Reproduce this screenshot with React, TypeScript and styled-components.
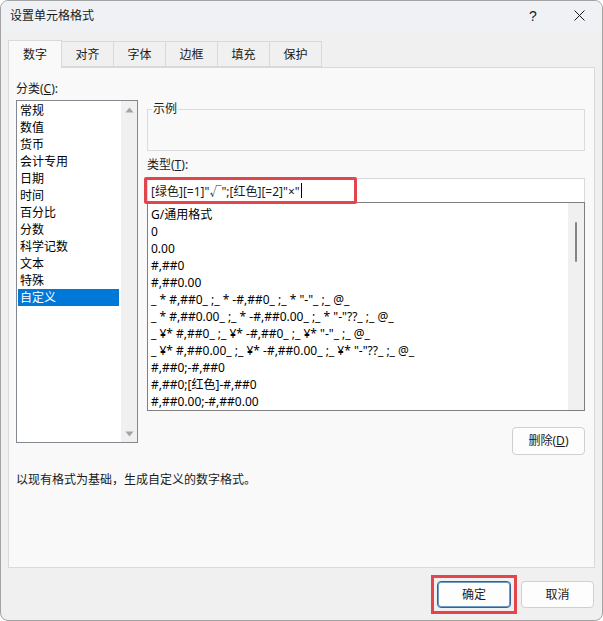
import React from 'react'
import styled, { createGlobalStyle } from 'styled-components'

const GlobalStyle = createGlobalStyle`
  html, body {
    margin: 0;
    padding: 0;
    background: #ffffff;
  }
  body {
    font-family: "Noto Sans", "Noto Sans CJK SC", sans-serif;
    font-size: 12px;
    color: #1a1a1a;
  }
  * {
    box-sizing: border-box;
  }
`

const Window = styled.div`
  width: 603px;
  height: 621px;
  display: flex;
  flex-direction: column;
  background: #f0f0f0;
  border: 1px solid #a3a3a3;
  border-radius: 8px;
  overflow: hidden;
`
const TitleBar = styled.div`
  flex: none;
  height: 31px;
  display: flex;
  align-items: center;
  background: #eff1f4;
`
const Title = styled.div`
  flex: 1;
  padding: 0 0 2px 9px;
  line-height: 16px;
`
const WinButton = styled.div`
  width: 46px;
  height: 31px;
  display: flex;
  align-items: center;
  justify-content: center;
  padding-bottom: 2px;
  font-family: "Liberation Sans", sans-serif;
  font-size: 14px;
`
const Body = styled.div`
  flex: 1;
  display: flex;
  flex-direction: column;
  padding: 8px 7px 0 7px;
`
const TabStrip = styled.div`
  flex: none;
  height: 27px;
  display: flex;
  align-items: flex-end;
`
const Tab = styled.div<{ $active?: boolean }>`
  position: relative;
  z-index: ${({ $active }) => ($active ? 2 : 1)};
  width: ${({ $active }) => ($active ? 54 : 53)}px;
  height: ${({ $active }) => ($active ? 28 : 26)}px;
  margin-bottom: ${({ $active }) => ($active ? -1 : 0)}px;
  margin-right: -1px;
  display: flex;
  align-items: center;
  justify-content: center;
  padding-top: ${({ $active }) => ($active ? 0 : 2)}px;
  line-height: 16px;
  background: ${({ $active }) => ($active ? '#f9f9f9' : '#f0f0f0')};
  border: 1px solid #d9d9d9;
  border-bottom: ${({ $active }) => ($active ? 'none' : '1px solid #d9d9d9')};
`
const Panel = styled.div`
  flex: 1;
  display: flex;
  flex-direction: column;
  background: #f9f9f9;
  border: 1px solid #d9d9d9;
  padding: 13px 9px 0 7px;
`
const ContentRow = styled.div`
  display: flex;
  gap: 9px;
`
const LeftCol = styled.div`
  width: 122px;
  display: flex;
  flex-direction: column;
`
const RightCol = styled.div`
  flex: 1;
  display: flex;
  flex-direction: column;
  padding-top: 20px;
`
const Label = styled.div<{ $gap?: number }>`
  line-height: 16px;
  margin-top: ${({ $gap }) => $gap ?? 0}px;
`
const U = styled.span`
  text-decoration: underline;
  text-underline-offset: 1px;
`
const CategoryList = styled.div`
  margin-top: 3px;
  height: 343px;
  display: flex;
  background: #ffffff;
  border: 1px solid #828790;
`
const CategoryItems = styled.div`
  flex: 1;
  padding: 1px 2px 0 1px;
`
const CategoryItem = styled.div<{ $selected?: boolean }>`
  height: 17px;
  line-height: 17px;
  padding-left: 2px;
  white-space: nowrap;
  background: ${({ $selected }) => ($selected ? '#0078d7' : 'transparent')};
  color: ${({ $selected }) => ($selected ? '#ffffff' : '#000000')};
`
const ScrollTrack = styled.div`
  width: 16px;
  flex: none;
  display: flex;
  flex-direction: column;
  align-items: center;
  background: #f0f0f0;
`
const ArrowBox = styled.div`
  height: 17px;
  width: 16px;
  display: flex;
  align-items: center;
  justify-content: center;
`
const Spacer = styled.div`
  flex: 1;
`
const Thumb = styled.div`
  margin-top: 19px;
  width: 2px;
  height: 40px;
  border-radius: 1px;
  background: #858585;
`
const SampleGroup = styled.fieldset`
  margin: 0;
  padding: 0 4px;
  height: 50px;
  min-inline-size: 0;
  border: 1px solid #dcdcdc;
`
const SampleLegend = styled.legend`
  padding: 0 1px;
  line-height: 16px;
  font-size: 12px;
`
const TypeBox = styled.div`
  position: relative;
  margin-top: 5px;
  height: 24px;
  display: flex;
  align-items: center;
  padding-left: 3px;
  background: #ffffff;
  border: 1px solid #d9d9d9;
  border-bottom: none;
  white-space: pre;
`
const Caret = styled.span`
  display: inline-block;
  width: 1px;
  height: 15px;
  margin-left: 1px;
  background: #000000;
`
const RedMark = styled.div`
  position: absolute;
  left: -4px;
  top: -2px;
  width: 213px;
  height: 27px;
  border: 3px solid #e2464c;
  border-radius: 2px;
  pointer-events: none;
`
const FormatList = styled.div`
  height: 209px;
  display: flex;
  background: #ffffff;
  border: 1px solid #7f7f7f;
`
const FormatItems = styled.div`
  flex: 1;
  padding: 3px 3px 0 3px;
  overflow: hidden;
`
const FormatItem = styled.div`
  height: 17px;
  line-height: 17px;
  white-space: pre;
  color: #000000;
`
const Button = styled.div<{ $primary?: boolean }>`
  width: ${({ $primary }) => ($primary ? 74 : 73)}px;
  height: ${({ $primary }) => ($primary ? 27 : 28)}px;
  display: flex;
  align-items: center;
  justify-content: center;
  line-height: 16px;
  background: #fdfdfd;
  border: 1px solid ${({ $primary }) => ($primary ? '#2f6596' : '#d0d0d0')};
  border-radius: 4px;
  box-shadow: ${({ $primary }) => ($primary ? 'inset 0 0 0 1px #6f9bc4' : 'none')};
`
const DeleteButton = styled(Button)`
  align-self: flex-end;
  margin-top: 16px;
`
const CancelButton = styled(Button)`
  margin-top: 6px;
  height: 27px;
`
const OkFrame = styled.div`
  display: flex;
  padding: 3px;
  border: 3px solid #e2464c;
`
const Description = styled.div`
  margin-top: 17px;
  line-height: 16px;
`
const Footer = styled.div`
  flex: none;
  height: 52px;
  display: flex;
  justify-content: flex-end;
  align-items: flex-start;
  gap: 4px;
  padding: 7px 8px 0 0;
`

const categories = ['常规', '数值', '货币', '会计专用', '日期', '时间', '百分比', '分数', '科学记数', '文本', '特殊', '自定义']

const formats = [
  'G/通用格式',
  '0',
  '0.00',
  '#,##0',
  '#,##0.00',
  '_ * #,##0_ ;_ * -#,##0_ ;_ * "-"_ ;_ @_',
  '_ * #,##0.00_ ;_ * -#,##0.00_ ;_ * "-"??_ ;_ @_',
  '_ ¥* #,##0_ ;_ ¥* -#,##0_ ;_ ¥* "-"_ ;_ @_',
  '_ ¥* #,##0.00_ ;_ ¥* -#,##0.00_ ;_ ¥* "-"??_ ;_ @_',
  '#,##0;-#,##0',
  '#,##0;[红色]-#,##0',
  '#,##0.00;-#,##0.00',
]

const tabs = ['数字', '对齐', '字体', '边框', '填充', '保护']

const Triangle = ({ up }: { up?: boolean }) => (
  <svg width="9" height="6" viewBox="0 0 9 6">
    <path d={up ? 'M0.5 5.5 L4.5 0.5 L8.5 5.5 Z' : 'M0.5 0.5 L4.5 5.5 L8.5 0.5 Z'} fill="#a3a3a3" />
  </svg>
)

const CloseIcon = () => (
  <svg width="11" height="11" viewBox="0 0 11 11">
    <path d="M0.5 0.5 L10.5 10.5 M10.5 0.5 L0.5 10.5" stroke="#1a1a1a" strokeWidth="1" fill="none" />
  </svg>
)

const App = () => {
  return (
    <>
      <GlobalStyle />
      <Window>
        <TitleBar>
          <Title>设置单元格格式</Title>
          <WinButton>?</WinButton>
          <WinButton>
            <CloseIcon />
          </WinButton>
        </TitleBar>
        <Body>
          <TabStrip>
            {tabs.map((t, i) => (
              <Tab key={t} $active={i === 0}>{t}</Tab>
            ))}
          </TabStrip>
          <Panel>
            <ContentRow>
              <LeftCol>
                <Label>分类(<U>C</U>):</Label>
                <CategoryList>
                  <CategoryItems>
                    {categories.map((c) => (
                      <CategoryItem key={c} $selected={c === '自定义'}>{c}</CategoryItem>
                    ))}
                  </CategoryItems>
                  <ScrollTrack>
                    <ArrowBox><Triangle up /></ArrowBox>
                    <Spacer />
                    <ArrowBox><Triangle /></ArrowBox>
                  </ScrollTrack>
                </CategoryList>
              </LeftCol>
              <RightCol>
                <SampleGroup>
                  <SampleLegend>示例</SampleLegend>
                </SampleGroup>
                <Label $gap={6}>类型(<U>T</U>):</Label>
                <TypeBox>
                  [绿色][=1]"√";[红色][=2]"×"
                  <Caret />
                  <RedMark />
                </TypeBox>
                <FormatList>
                  <FormatItems>
                    {formats.map((f) => (
                      <FormatItem key={f}>{f}</FormatItem>
                    ))}
                  </FormatItems>
                  <ScrollTrack>
                    <Thumb />
                  </ScrollTrack>
                </FormatList>
                <DeleteButton>删除(<U>D</U>)</DeleteButton>
              </RightCol>
            </ContentRow>
            <Description>以现有格式为基础，生成自定义的数字格式。</Description>
          </Panel>
        </Body>
        <Footer>
          <OkFrame>
            <Button $primary>确定</Button>
          </OkFrame>
          <CancelButton>取消</CancelButton>
        </Footer>
      </Window>
    </>
  )
}

export default App
